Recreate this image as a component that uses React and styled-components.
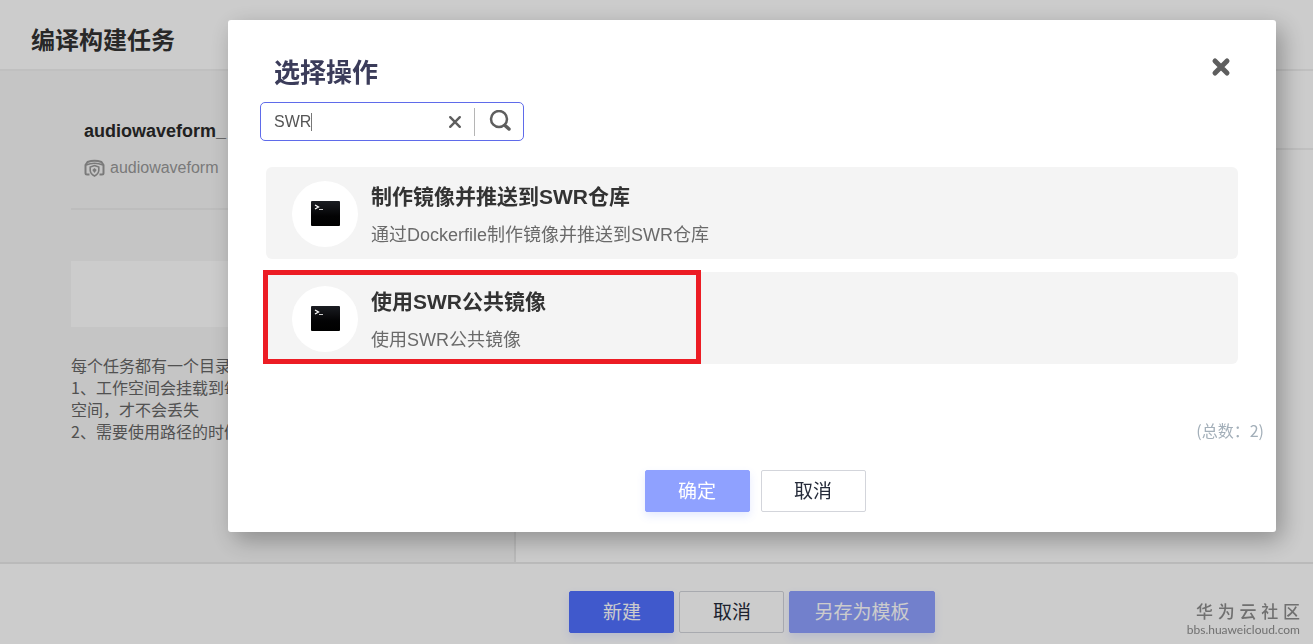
import { useState } from "react";
import styled, { createGlobalStyle } from "styled-components";

const sans = `"Liberation Sans", "Noto Sans CJK SC", sans-serif`;
const cjk = `"Noto Sans CJK SC", sans-serif`;

const GlobalStyle = createGlobalStyle`
  * {
    box-sizing: border-box;
  }
  body {
    margin: 0;
    background: #fff;
    font-family: ${sans};
    color: #333;
  }
  h1, h2, h3, p, ul {
    margin: 0;
    padding: 0;
  }
  button, input {
    font-family: inherit;
  }
`;

const Page = styled.div`
  display: flex;
  flex-direction: column;
  min-height: 100vh;
`;

const Header = styled.header`
  padding: 25px 31px 12px;
  border-bottom: 2px solid #f0f0f0;

  h1 {
    font-size: 24px;
    line-height: 32px;
    color: #333;
  }
`;

const Body = styled.div`
  flex: 1;
  display: flex;
`;

const Side = styled.aside`
  width: 516px;
  flex-shrink: 0;
  padding: 47px 70px 0 71px;
  background: #f7f7f7;
  border-right: 2px solid #e9e9e9;
`;

const Content = styled.main`
  flex: 1;
`;

const ContentBar = styled.div`
  height: 79px;
  border-bottom: 2px solid #f0f0f0;
`;

const Task = styled.section`
  padding: 0 0 28px 13px;
  border-bottom: 2px solid #ededed;

  h2 {
    font-size: 18px;
    line-height: 26px;
    color: #2a2a2a;
  }
`;

const Repo = styled.p`
  display: flex;
  align-items: center;
  gap: 5px;
  margin-top: 12px;
  font-size: 16px;
  line-height: 24px;
  color: #999;
`;

const Card = styled.div`
  height: 66px;
  margin-top: 51px;
  background: #fff;
`;

const Desc = styled.p`
  margin-top: 27px;
  font-family: ${cjk};
  font-size: 16px;
  line-height: 22px;
  color: #666;
  white-space: nowrap;
  overflow: hidden;
`;

const Footer = styled.footer`
  display: flex;
  justify-content: center;
  gap: 5px;
  padding: 27px 0 11px 191px;
  border-top: 2px solid #e9e9e9;
`;

const Mask = styled.div`
  position: fixed;
  inset: 0;
  display: flex;
  align-items: flex-start;
  padding: 20px 37px 0 228px;
  background: rgba(0, 0, 0, 0.2);
`;

const Dialog = styled.div`
  flex: 1;
  padding: 35px 38px 20px 32px;
  background: #fff;
  border-radius: 3px;
  box-shadow: 6px 8px 24px rgba(0, 0, 0, 0.3);
`;

const DialogHead = styled.div`
  display: flex;
  justify-content: space-between;
  align-items: flex-start;
  padding-left: 14px;

  h2 {
    font-size: 26px;
    line-height: 36px;
    color: #3b3c5a;
  }
`;

const IconButton = styled.button`
  display: flex;
  padding: 0;
  border: none;
  background: none;
  color: #5e5e5e;
  cursor: pointer;
`;

const CloseButton = styled(IconButton)`
  padding: 2px 7px;
`;

const SearchBox = styled.div`
  display: flex;
  align-items: center;
  width: 264px;
  height: 39px;
  margin-top: 11px;
  padding: 0 11px 0 0;
  border: 1px solid #5f6bea;
  border-radius: 5px;
`;

const SearchLabel = styled.label`
  flex: 1;
  display: flex;
  align-items: center;
  padding-left: 13px;
  cursor: text;
`;

const SearchInput = styled.input`
  field-sizing: content;
  min-width: 1px;
  max-width: 160px;
  padding: 0;
  border: none;
  outline: none;
  background: none;
  font-size: 16px;
  line-height: 20px;
  color: #555;
  caret-color: transparent;
`;

const Caret = styled.span`
  width: 1px;
  height: 18px;
  background: #777;
`;

const Divider = styled.span`
  width: 1px;
  height: 28px;
  margin: 0 14px 0 11px;
  background: #b5b5b5;
`;

const List = styled.ul`
  display: flex;
  flex-direction: column;
  gap: 13px;
  margin: 26px 0 0 6px;
  list-style: none;
`;

const Item = styled.li`
  position: relative;
  display: flex;
  align-items: center;
  gap: 13px;
  padding: 12px 26px 11px;
  background: #f4f4f4;
  border-radius: 6px;
`;

const Round = styled.div`
  display: flex;
  align-items: center;
  justify-content: center;
  width: 66px;
  height: 66px;
  border-radius: 50%;
  background: #fff;
`;

const ItemText = styled.div`
  h3 {
    font-size: 21px;
    line-height: 36px;
    color: #333;
  }
  p {
    margin-top: 7px;
    font-size: 18px;
    line-height: 26px;
    color: #6a6a6a;
  }
`;

// 红色标注框
const Mark = styled.span`
  position: absolute;
  top: -2px;
  bottom: 0;
  left: -3px;
  width: 438px;
  border: 5px solid #ec1c24;
  pointer-events: none;
`;

const Total = styled.p`
  margin: 54px -26px 0 0;
  text-align: right;
  font-family: ${cjk};
  font-size: 16px;
  line-height: 24px;
  color: #a3afb9;
`;

const DialogFoot = styled.div`
  display: flex;
  justify-content: center;
  gap: 11px;
  margin-top: 28px;
  padding-left: 12px;
`;

const colors = {
  primary: { bg: "#5170ff", line: "#5170ff", text: "#fff" },
  light: { bg: "#8fa1ff", line: "#8fa1ff", text: "#fff" },
  plain: { bg: "#fff", line: "#d3d5db", text: "#252b3a" },
};

const Btn = styled.button`
  height: 42px;
  min-width: 105px;
  padding: 1px 24px 0;
  border: 1px solid ${(props) => colors[props.$kind].line};
  border-radius: 2px;
  background: ${(props) => colors[props.$kind].bg};
  color: ${(props) => colors[props.$kind].text};
  font-size: 19px;
  line-height: 26px;
  box-shadow: ${(props) =>
    props.$kind === "plain" ? "none" : "0 4px 8px rgba(81, 112, 255, 0.15)"};
  cursor: pointer;
`;

const Watermark = styled.div`
  position: fixed;
  right: 13px;
  bottom: 7px;
  color: #707070;
  text-align: right;

  strong {
    display: block;
    font-size: 17px;
    font-weight: 500;
    line-height: 20px;
  }
  span {
    display: block;
    font-family: Lato, sans-serif;
    font-size: 12px;
    line-height: 14px;
  }
`;

const RepoIcon = () => (
  <svg width="21" height="18" viewBox="0 0 21 18" fill="none" stroke="currentColor">
    <path d="M5.500 15.500H3Q1.500 15.500 1.500 14V6L3.500 3Q10.500 .5 17.500 3L19.500 6V14Q19.500 15.500 18 15.500H15.500" strokeWidth="2" />
    <path d="M2 6Q10.500 2.500 19 6" strokeWidth="1.500" />
    <path d="M10.500 6.500L14.800 8V11.500Q14.500 15 10.500 17Q6.500 15 6.200 11.500V8Z" strokeWidth="1.600" />
    <path d="M8.300 11L10.500 9L12.700 11L10.500 14Z" fill="currentColor" stroke="none" />
  </svg>
);

const TerminalIcon = () => (
  <svg width="29" height="25" viewBox="0 0 29 25">
    <defs>
      <linearGradient id="screen" x1="0" y1="0" x2="0" y2="1">
        <stop offset="0" stopColor="#1b1d22" />
        <stop offset="0.6" stopColor="#030304" />
        <stop offset="1" stopColor="#000" />
      </linearGradient>
    </defs>
    <rect width="29" height="25" rx="1" fill="url(#screen)" />
    <path d="M4 4L7.500 6L4 8" fill="none" stroke="#fff" strokeWidth="1.300" />
    <path d="M8 8.500H12" stroke="#ccc" strokeWidth="1" />
  </svg>
);

const CrossIcon = ({ size, weight }) => (
  <svg width={size} height={size} viewBox="0 0 20 20" fill="none" stroke="currentColor" strokeWidth={weight} strokeLinecap="round">
    <path d="M4 4L16 16M16 4L4 16" />
  </svg>
);

const SearchIcon = () => (
  <svg width="23" height="23" viewBox="0 0 23 23" fill="none" stroke="currentColor">
    <circle cx="10" cy="9" r="8" strokeWidth="2.500" />
    <path d="M16 15.500L20 19" strokeWidth="3.500" strokeLinecap="round" />
  </svg>
);

const items = [
  { title: "制作镜像并推送到SWR仓库", desc: "通过Dockerfile制作镜像并推送到SWR仓库" },
  { title: "使用SWR公共镜像", desc: "使用SWR公共镜像", marked: true },
];

function App() {
  const [word, setWord] = useState("SWR");

  return (
    <>
      <GlobalStyle />
      <Page>
        <Header>
          <h1>编译构建任务</h1>
        </Header>
        <Body>
          <Side>
            <Task>
              <h2>audiowaveform_</h2>
              <Repo>
                <RepoIcon />
                audiowaveform
              </Repo>
            </Task>
            <Card />
            <Desc>
              每个任务都有一个目录
              <br />
              1、工作空间会挂载到每
              <br />
              空间，才不会丢失
              <br />
              2、需要使用路径的时候
            </Desc>
          </Side>
          <Content>
            <ContentBar />
          </Content>
        </Body>
        <Footer>
          <Btn $kind="primary">新建</Btn>
          <Btn $kind="plain">取消</Btn>
          <Btn $kind="light">另存为模板</Btn>
        </Footer>
      </Page>

      <Mask>
        <Dialog role="dialog" aria-labelledby="dialog-title">
          <DialogHead>
            <h2 id="dialog-title">选择操作</h2>
            <CloseButton aria-label="关闭">
              <CrossIcon size={20} weight={5} />
            </CloseButton>
          </DialogHead>
          <SearchBox>
            <SearchLabel>
              <SearchInput
                aria-label="搜索"
                value={word}
                onChange={(e) => setWord(e.target.value)}
              />
              <Caret />
            </SearchLabel>
            <IconButton aria-label="清空" onClick={() => setWord("")}>
              <CrossIcon size={16} weight={3} />
            </IconButton>
            <Divider />
            <IconButton aria-label="查询">
              <SearchIcon />
            </IconButton>
          </SearchBox>
          <List>
            {items.map((item) => (
              <Item key={item.title}>
                <Round>
                  <TerminalIcon />
                </Round>
                <ItemText>
                  <h3>{item.title}</h3>
                  <p>{item.desc}</p>
                </ItemText>
                {item.marked && <Mark />}
              </Item>
            ))}
          </List>
          <Total>(总数：2)</Total>
          <DialogFoot>
            <Btn $kind="light">确定</Btn>
            <Btn $kind="plain">取消</Btn>
          </DialogFoot>
        </Dialog>
      </Mask>

      <Watermark>
        <strong>华 为 云 社 区</strong>
        <span>bbs.huaweicloud.com</span>
      </Watermark>
    </>
  );
}

export default App;
